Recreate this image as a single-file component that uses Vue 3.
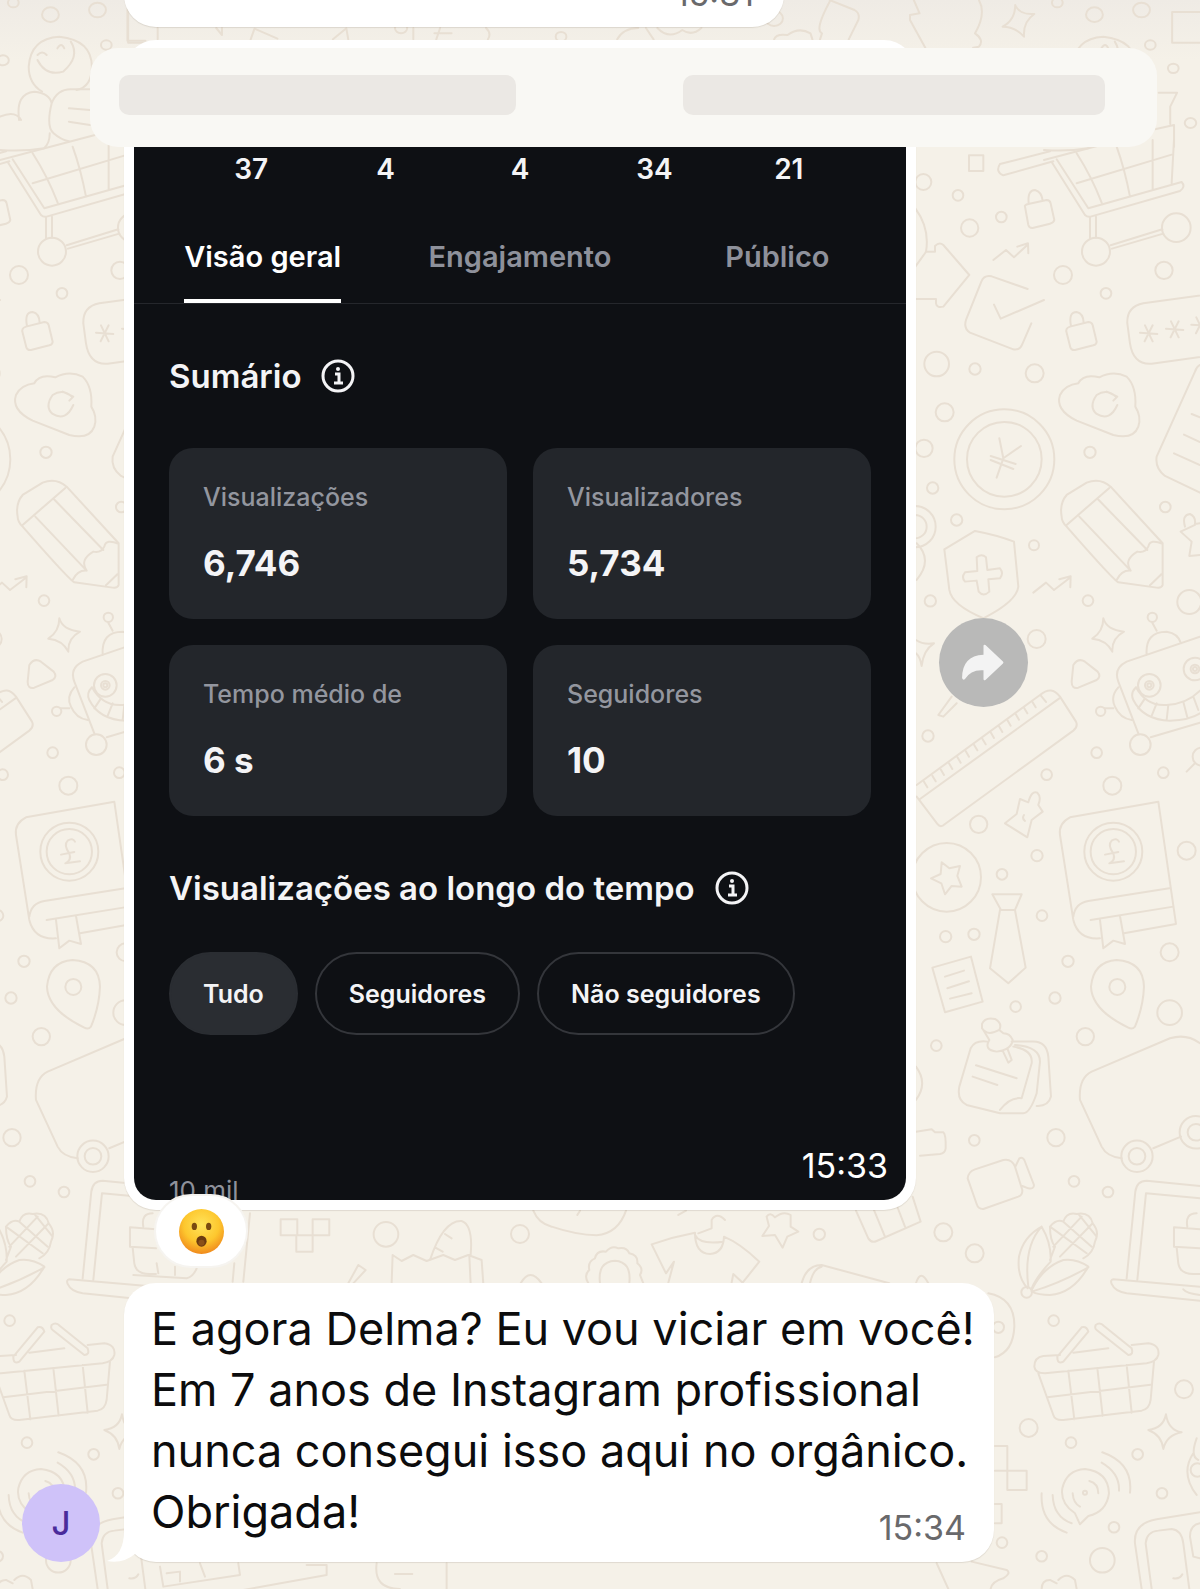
<script setup>
import { ref } from 'vue'

const stats = [37, 4, 4, 34, 21]
const tabs = ['Visão geral', 'Engajamento', 'Público']
const cards = [
   { label: 'Visualizações', value: '6,746' },
   { label: 'Visualizadores', value: '5,734' },
   { label: 'Tempo médio de', value: '6 s' },
   { label: 'Seguidores', value: '10' },
]
const filters = ['Tudo', 'Seguidores', 'Não seguidores']
const lines = [
   'E agora Delma? Eu vou viciar em você!',
   'Em 7 anos de Instagram profissional',
   'nunca consegui isso aqui no orgânico.',
]

const tab = ref(tabs[0])
const filter = ref(filters[0])

// wallpaper repeats horizontally at this distance
const tileWidth = 1044

// each band of the wallpaper is drawn on its own enlarged grid
const bands = [
   {
      at: 'translate(900 140) scale(.3333)',
      dots: [[70,126,24],[174,166,16],[304,231,16],[209,264,26],[489,405,27],[792,391,26],[618,460,16],[110,672,37],[225,687,17],[404,700,27],[134,817,27],[72,925,26],[570,937,17],[98,1044,17],[170,1140,17],[402,1216,15],[796,1101,16],[91,1383,17],[564,1382,16],[868,1386,36],[588,335,42],[829,263,43],[313,958,150],[313,958,112],[45,1160,62],[45,1160,35]],
      paths: [
         // small box, shopping cart
         'M207 46 H250 V93 H207 Z',
         'M310 106 L460 64 M300 72 Q285 95 310 106 M300 72 L450 34 M455 66 L555 225 Q562 232 572 230 L840 153 Q858 140 845 126 L565 205 L470 58 M432 60 L717 -15 M530 40 Q575 110 605 188 M650 20 Q675 90 690 170 M758 0 V148 M822 0 L815 130 M530 130 L815 44 M570 230 V296 M588 230 V293 M632 316 L787 268 M636 326 L790 281',
         // padlocks
         'M375 200 Q372 195 385 192 L440 180 Q450 180 452 190 L463 240 Q462 248 450 251 L398 264 Q388 265 385 255 Z M386 190 Q382 150 405 150 Q425 155 428 182',
         'M500 578 Q495 565 510 560 L565 546 Q575 546 578 555 L590 605 Q590 613 580 616 L525 630 Q515 632 511 622 Z M513 558 Q505 516 530 516 Q550 520 551 548',
         // trend arrows
         'M280 360 L318 330 L342 352 L382 315 M352 320 L384 310 L385 340 M400 1358 L438 1328 L462 1350 L508 1315 M478 1318 L512 1309 L511 1342',
         'M46 380 Q75 340 78 335 H105 V318 Q118 305 130 315 L208 405 L130 500 Q110 505 108 490 V477 H46 M46 205 Q90 265 78 335',
         // check mark
         'M383 447 L275 409 Q252 404 244 425 L198 540 Q190 565 210 578 L340 628 Q360 632 368 610 L394 550 M282 494 L302 536 L432 480',
         // password field
         'M980 456 L730 490 Q680 500 682 550 L690 610 Q700 675 755 671 L980 640 M720 578 L772 582 M735 556 L758 604 M758 556 L734 604 M798 566 L850 570 M813 544 L836 592 M836 544 L812 592 M874 554 L926 558 M889 532 L912 580 M912 532 L888 580',
         // cloud
         'M535 730 Q550 700 598 712 Q640 690 680 710 Q710 740 706 800 Q725 830 715 860 Q700 900 640 885 L530 842 Q465 810 480 765 Q495 735 535 730 Z M648 770 Q620 745 590 765 Q565 800 590 822 Q630 845 652 795 M620 755 L652 770 L640 782',
         'M298 895 L310 955 L363 918 M310 955 L290 1013 M272 948 L347 972 M272 960 L340 987',
         'M900 675 Q890 680 885 695 L770 950 Q765 985 795 1008 L900 1058 M875 822 L900 832 M852 884 L900 906 M822 940 L900 975',
         // pencil
         'M485 1130 Q478 1090 500 1065 L560 1028 Q600 1012 632 1040 L788 1210 V1335 Q785 1345 770 1343 L655 1327 Q640 1320 500 1160 Q485 1145 485 1130 Z M500 1155 L628 1044 M538 1130 L692 1292 M594 1078 L742 1230 M650 1320 Q665 1290 692 1292 Q670 1260 712 1235 Q735 1240 745 1220 Q750 1195 788 1212 M750 1336 L785 1302',
         // shield
         'M133 1228 L225 1173 Q290 1185 342 1205 L355 1340 Q350 1385 250 1435 Q155 1395 148 1350 Z M230 1252 Q245 1240 258 1252 L262 1290 L300 1285 Q312 1300 300 1315 L265 1318 L268 1355 Q250 1372 236 1355 L230 1322 L195 1325 Q183 1312 195 1297 L232 1293 Z',
         'M50 1210 Q100 1260 50 1320 M855 1160 Q845 1125 870 1122 Q888 1130 885 1152 L900 1150 M842 1175 L885 1155 M842 1175 L875 1205 L868 1248 L900 1245',
      ],
   },
   {
      at: 'translate(900 600) scale(.3333)',
      dots: [[410,117,27],[84,408,17],[440,524,16],[590,458,16],[637,557,27],[790,518,16],[236,673,26],[411,767,17],[306,823,16],[860,752,27],[426,947,16],[137,1010,17],[222,1003,17],[504,1084,17],[809,1057,27],[465,1194,17],[347,1220,16],[809,1238,37],[556,1310,26],[109,1337,16],[721,434,31],[748,256,34],[748,256,13],[748,256,6],[885,207,34],[885,207,13],[885,207,6],[602,334,14],[757,52,14],[140,832,103],[640,755,87],[640,755,68],[652,1161,24],[711,1669,47],[711,1669,25],[888,1597,49],[888,1597,25],[905,470,27]],
      paths: [
         'M610 55 Q620 90 672 95 Q635 115 637 155 Q620 120 577 116 Q610 95 610 55 Z M48 120 Q70 135 102 130 Q70 150 65 198 Q60 170 48 160',
         'M520 195 Q535 172 555 185 L593 215 Q605 230 590 240 L535 263 Q515 268 515 245 Z',
         // robot
         'M900 110 L680 185 Q640 205 655 245 L715 400 M752 412 L900 368 M708 262 Q690 280 700 300 Q730 360 810 362 Q870 360 900 340 M708 262 Q740 320 800 315 Q860 312 900 272 M735 295 L715 325 M770 310 L755 348 M805 315 L800 360 M850 305 L862 352 M880 290 L895 330 M655 262 Q630 290 645 320 Q660 355 695 360 M640 325 H615 M740 165 Q735 95 800 95 Q835 100 843 130 M770 92 L757 68',
         // ruler
         'M50 555 Q250 410 420 285 Q455 255 480 290 L528 365 Q535 380 520 392 L135 672 Q122 685 112 672 L50 590 M60 597 L478 295 M155 290 L115 345 L130 350 L170 310 M860 515 L885 490',
         'M72 545 L82 562 M97 527 L107 544 M122 508 L132 525 M147 490 L157 507 M172 471 L182 488 M197 453 L207 470 M222 434 L232 451 M247 416 L257 433 M272 397 L282 414 M297 379 L307 396 M322 360 L332 377 M347 342 L357 359 M372 323 L382 340 M397 305 L407 322 M422 286 L438 306',
         // thumbtack, star badge
         'M360 597 L385 607 Q395 570 412 578 Q425 590 415 615 L428 635 L395 660 L382 712 L315 670 L350 642 Z M372 645 Q365 655 375 663',
         'M125 787 L148 805 L180 798 L172 828 L185 860 L155 858 L135 883 L124 850 L93 835 L122 822 Z',
         // tie, receipt
         'M277 883 H365 L345 930 H303 Z M300 930 L270 1105 L325 1150 L377 1103 L345 930',
         'M97 1103 L213 1070 L248 1205 L135 1237 Z M135 1130 L192 1112 M142 1165 L207 1144 M150 1196 L215 1180',
         // book
         'M510 652 L775 605 L828 972 L672 1000 M600 1015 Q535 1020 520 960 L480 705 Q475 670 510 652 M520 950 Q525 910 565 903 L808 865 M572 960 L820 920 M600 960 L610 1045 L640 1022 L675 1032 L660 948',
         'M657 725 Q650 712 635 722 Q622 735 640 760 Q648 780 628 790 L672 784 M615 764 L655 756',
         // map pin, pinned note
         'M650 1080 Q730 1085 732 1160 Q730 1220 705 1280 Q697 1290 685 1283 Q575 1230 573 1160 Q580 1085 650 1080',
         'M262 1325 Q225 1320 212 1345 L178 1460 Q170 1500 200 1515 L300 1540 H370 M335 1325 H400 Q440 1325 445 1370 L453 1490 Q445 1520 410 1518 M340 1340 Q400 1350 395 1390 L365 1495 Q330 1490 300 1530 M345 1335 Q420 1340 420 1385 L410 1480 Q390 1540 370 1540 M228 1396 L350 1435 M218 1430 L292 1455 M246 1272 Q255 1250 285 1257 Q308 1270 298 1290 Q262 1310 246 1285 Z M250 1290 L268 1320 Q250 1350 290 1355 Q335 1350 338 1320 Q330 1300 310 1300 L298 1290 M308 1352 L325 1388 L335 1380 L322 1345',
         'M900 1330 Q860 1300 810 1315 L575 1415 Q535 1435 540 1500 L605 1640 Q620 1670 665 1675 M760 1645 L843 1610 M48 1400 Q85 1450 48 1500',
      ],
   },
   {
      at: 'translate(900 1080) scale(.3333)',
      dots: [[223,181,16],[468,173,26],[522,304,16],[624,336,16],[130,457,27],[224,520,27],[461,722,16],[852,928,27],[386,1044,27],[513,1088,16],[713,1123,16],[786,1240,16],[642,1342,16],[306,1388,16],[425,1429,16],[607,1441,37],[380,637,16],[295,742,17],[555,1238,6],[892,1170,20]],
      paths: [
         'M48 155 L95 148 L105 157 H130 Q138 162 137 205 Q135 220 120 222 L60 227',
         'M203 295 Q205 275 225 268 L310 240 Q335 235 345 260 L367 330 Q368 345 355 350 L250 387 Q235 388 230 372 Z M347 258 L358 235 Q368 230 373 240 L402 315 Q402 328 385 325 L367 318',
         // corn
         'M383 625 Q350 590 357 530 Q370 470 425 440 Q455 490 452 545 Q410 590 395 625 M425 440 Q370 500 385 620 M395 630 Q430 560 490 540 Q530 535 565 560 Q520 640 450 645 Q415 645 395 635 Q480 610 565 562 M450 440 Q470 415 490 425 Q500 395 530 402 Q570 395 578 430 Q600 455 585 485 Q580 520 550 535 M450 440 Q450 480 465 500 L450 540 M450 440 L560 520 M490 425 L575 500 M535 402 L590 470 M578 430 L480 530 M545 410 L460 500',
         // laptop
         'M900 318 L740 302 Q710 302 706 335 L680 595 M712 600 L738 340 L900 355 M900 620 L640 598 Q630 600 635 612 Q645 635 680 640 L900 662 M850 628 Q860 640 900 645 M900 448 L822 442 V500 L900 505 M830 502 L835 550 Q840 582 880 582 H900 M862 440 Q855 400 890 400',
         // basket
         'M480 825 L430 828 Q403 832 403 860 Q405 880 435 880 L740 850 Q770 845 775 825 Q780 795 745 790 L695 795 M520 818 L625 805 M415 880 L460 1005 Q465 1022 490 1020 L725 992 Q748 988 752 960 L762 845 M442 952 L752 914 M505 872 L523 1018 M592 864 L608 1008 M680 855 L695 998 M472 830 L545 742 Q560 738 565 755 L490 845 Q472 855 472 830 M587 735 Q600 725 612 738 L695 805 Q702 825 685 825 L590 750 Q583 745 587 735',
         'M265 640 Q345 655 343 740 Q340 815 285 832 M798 1003 Q805 1050 845 1057 Q800 1065 790 1107 Q785 1065 745 1050 Q790 1045 798 1003 Z',
         // broadcast
         'M525 1300 Q480 1270 487 1225 Q500 1170 555 1167 Q625 1175 627 1240 Q620 1295 565 1308 L540 1333 Z M607 1117 Q700 1150 690 1238 M605 1148 Q660 1180 657 1232 M425 1240 Q420 1330 500 1358 M458 1245 Q460 1310 515 1330 M518 1240 Q520 1270 540 1280 M568 1203 Q595 1210 595 1240',
         'M285 1098 H322 V1172 M285 1172 H380 V1230 H322 V1172 M285 1272 H305 V1330 H285',
         'M900 1297 L770 1318 Q700 1330 705 1390 L725 1527 M755 1527 L737 1390 Q740 1355 775 1352 L815 1347 Q845 1350 850 1390 L868 1527 M820 1495 Q840 1498 847 1483 M900 1330 Q870 1335 870 1370 L880 1430 L900 1435',
         'M890 1075 Q870 1130 895 1140 M880 1120 Q840 1180 890 1245 M110 1450 L145 1527 M215 1445 L320 1470 Q335 1480 310 1495 Q275 1505 272 1527 M425 1527 Q425 1500 450 1500 L470 1510 M475 1500 Q500 1475 525 1500 L530 1527',
      ],
   },
   {
      at: 'translate(0 1160) scale(.3333)',
      dots: [[1158,223,37]],
      paths: [
         'M842 178 H892 V226 H842 Z M938 178 H988 V226 H938 Z M889 226 H938 V275 H889 Z',
         // bread bag
         'M1175 370 L1178 285 L1205 303 L1240 285 L1280 303 L1330 285 L1365 300 L1405 285 L1445 300 L1450 370 M1408 285 L1412 370 M1290 300 Q1330 180 1385 183 Q1420 195 1412 285 M1335 222 L1355 235 M1305 262 L1328 275',
         'M1045 370 L1075 315 L1097 330 L1060 370 M480 1220 L490 1280 L720 1245 L715 1210 M500 1240 L540 1235 V1265 M600 1210 L615 1250 M920 1215 H980 V1245 L730 1290 M1130 1210 Q1120 1287 1200 1287 M1340 1210 V1287 M1185 1242 H1237 M750 160 L730 365 M703 310 L698 365 M400 345 L560 355 Q580 350 590 325 M475 340 L470 310 M525 345 V320',
      ],
   },
   {
      at: 'translate(500 1120) scale(.3333)',
      dots: [[60,342,27],[958,343,17]],
      paths: [
         'M100 272 Q115 310 155 320 Q230 345 290 346 Q355 340 378 272 M62 490 Q90 440 125 490 M232 285 L240 272 M535 285 L558 272',
         'M265 490 Q250 465 268 450 Q262 425 285 415 Q290 390 318 395 Q335 375 355 385 Q380 380 388 400 Q415 405 412 430 Q432 445 420 465 L430 490 M300 490 Q292 425 345 422 Q395 425 388 490',
         // shirt on a hanger
         'M505 488 L522 425 L498 460 L455 373 Q520 350 585 338 Q585 400 630 402 Q670 400 672 350 Q720 370 778 425 L728 488 L700 462 L695 488 M585 345 Q600 375 670 365 M595 340 L635 325 V300 Q650 275 675 300',
         'M800 290 Q810 275 825 292 Q850 272 872 285 L872 320 L895 335 L862 350 L848 383 L825 345 L787 348 L807 318 Z',
         'M1068 272 L1105 355 Q1115 370 1130 363 L1262 305 L1238 230 M1120 265 L1155 350 M1190 255 L1215 320 M905 490 Q920 435 965 435 L1168 490 M930 490 Q940 445 965 440 M1248 490 Q1262 445 1285 490',
      ],
   },
   {
      at: 'translate(600 0) scale(.3827 .3333)',
      dots: [[1195,8,14],[1292,44,22],[1415,30,22],[1438,135,14],[1498,205,14],[1543,369,15],[455,55,23]],
      paths: [
         'M600 0 L665 30 Q680 40 675 60 L650 118 M600 5 Q560 90 580 100 L575 118 M820 0 L835 40 L810 45 V60 L850 143 M990 0 Q1010 40 980 100 Q1005 120 990 140 L975 143',
         'M1085 15 Q1095 45 1135 42 Q1105 65 1108 110 Q1085 80 1052 80 Q1085 60 1085 15 Z M1568 36 H1495 V128 H1568 M1460 278 H1508 L1490 320 V372 M1450 388 L1500 375 V440',
         'M45 118 Q60 85 100 84 M120 84 L140 118 M150 84 Q180 120 215 90 Q240 110 265 84 M455 118 Q460 100 490 105 Q520 80 550 100 L555 118',
      ],
   },
   {
      // top left corner, seen once per tile
      at: 'translate(1044 0) scale(.3827 .3333)',
      dots: [[8,181,15]],
      paths: [
         'M110 275 Q75 250 75 200 Q80 115 155 110 Q240 120 240 200 Q240 260 200 270 M185 125 Q210 170 165 215 Q120 230 98 180 M98 165 Q110 150 122 165 M150 145 Q160 125 168 145',
         'M50 360 Q40 280 90 275 Q130 280 135 310 Q150 265 190 268 H235 M135 310 Q120 380 140 400 Q160 420 180 424 M0 350 Q40 330 55 360 M130 400 Q130 430 115 445 Q60 455 0 450 M180 325 L235 330 M180 365 L235 375',
      ],
   },
   {
      at: 'scale(.3827 .3333)',
      dots: [[1048,84,16],[1466,110,14]],
      paths: ['M333 30 V122 H380 M412 84 V118 M565 84 L580 105 V84 M655 118 L665 86 L725 116 M870 118 L905 85 L910 118 M1080 84 V118 M1135 100 H1180 M1150 84 L1140 118 M1270 84 Q1285 100 1275 118'],
   },
]
</script>

<template>
   <main class="chat">
      <svg class="wallpaper" aria-hidden="true">
         <g id="doodles">
            <g v-for="(band, i) in bands" :key="i" :transform="band.at">
               <circle v-for="(d, j) in band.dots" :key="'c' + j" :cx="d[0]" :cy="d[1]" :r="d[2]" />
               <path v-for="(p, j) in band.paths" :key="'p' + j" :d="p" />
            </g>
         </g>
         <use href="#doodles" :x="-tileWidth" />
      </svg>

      <article class="bubble earlier"><time>15:31</time></article>

      <div class="row">
         <article class="bubble picture">
            <section class="insights">
               <ul class="stats">
                  <li v-for="(s, i) in stats" :key="i">{{ s }}</li>
               </ul>
               <nav class="tabs">
                  <button v-for="t in tabs" :key="t" :class="{ active: tab == t }" @click="tab = t"><span>{{ t }}</span></button>
               </nav>
               <div class="title">
                  <h2>Sumário</h2>
                  <button class="info" aria-label="Sobre o sumário">
                     <svg viewBox="0 0 34 34"><circle cx="17" cy="17" r="15" /><path d="M14 15 H18 V24 M13 24 H22" /><circle class="dot" cx="17" cy="10" r="2" /></svg>
                  </button>
               </div>
               <dl class="cards">
                  <div v-for="c in cards" :key="c.label" class="card">
                     <dt>{{ c.label }}</dt>
                     <dd>{{ c.value }}</dd>
                  </div>
               </dl>
               <div class="title">
                  <h2>Visualizações ao longo do tempo</h2>
                  <button class="info" aria-label="Sobre as visualizações">
                     <svg viewBox="0 0 34 34"><circle cx="17" cy="17" r="15" /><path d="M14 15 H18 V24 M13 24 H22" /><circle class="dot" cx="17" cy="10" r="2" /></svg>
                  </button>
               </div>
               <div class="filters">
                  <button v-for="f in filters" :key="f" :class="{ active: filter == f }" @click="filter = f">{{ f }}</button>
               </div>
               <div class="axis">10 mil</div>
               <time class="stamp">15:33</time>
            </section>
            <button class="reaction" aria-label="Reação">
               <svg viewBox="0 0 44 44">
                  <defs>
                     <radialGradient id="face" cx=".5" cy=".35" r=".65">
                        <stop offset="0" stop-color="#ffe35a" />
                        <stop offset=".6" stop-color="#fdc72e" />
                        <stop offset="1" stop-color="#f08a1c" />
                     </radialGradient>
                  </defs>
                  <circle cx="22" cy="22" r="22" fill="url(#face)" />
                  <ellipse cx="15" cy="17" rx="2.6" ry="3.6" fill="#7a4a10" />
                  <ellipse cx="29" cy="17" rx="2.6" ry="3.6" fill="#7a4a10" />
                  <ellipse cx="22" cy="31.5" rx="5" ry="5.4" fill="#6b3a10" />
                  <ellipse cx="22" cy="33" rx="3" ry="3" fill="#8a5018" />
               </svg>
            </button>
         </article>
         <button class="forward" aria-label="Encaminhar">
            <svg viewBox="0 0 44 38"><path d="M22 2 Q22 0 24 1 L42 18 Q43 19 42 20 L24 37 Q22 38 22 36 V27 Q9 26 3 36 Q1 38 0 35 Q0 12 22 11 Z" /></svg>
         </button>
      </div>

      <div class="row message">
         <div class="avatar">J</div>
         <article class="bubble text">
            <svg class="tail" viewBox="0 0 34 34"><path d="M17 0 Q18 27 0 33 Q16 36 28 26 L34 0 Z" /></svg>
            <p v-for="l in lines" :key="l">{{ l }}</p>
            <div class="last">
               <p>Obrigada!</p>
               <time>15:34</time>
            </div>
         </article>
      </div>

      <header class="banner">
         <span></span>
         <span></span>
      </header>
   </main>
</template>

<style>
body { margin: 0; background: #f5f1e8; }
</style>

<style scoped>
* { box-sizing: border-box; }
.chat {
   position: relative;
   min-height: 100vh;
   overflow: hidden;
   font-family: Inter, "Liberation Sans", sans-serif;
   background: linear-gradient(#efebe5, #f5f1e8 60px);
}
button { font: inherit; color: inherit; border: none; background: none; padding: 0; cursor: pointer; }
p, h2, ul, dl, dd { margin: 0; padding: 0; }

.wallpaper {
   position: absolute; inset: 0; width: 100%; height: 100%;
   fill: none; stroke: #e8dfd3; stroke-width: 2px;
   stroke-linecap: round; stroke-linejoin: round;
}
.wallpaper path, .wallpaper circle { vector-effect: non-scaling-stroke; }

.bubble {
   position: relative;
   background: #fff;
   border-radius: 32px;
   box-shadow: 0 1px 1px rgba(90, 80, 60, .14);
}
.bubble time { font-size: 34px; line-height: 40px; color: #69696b; }
.earlier {
   width: 55vw;
   margin: -60px 0 13px 124px;
   padding: 34px 30px 13px;
   height: 87px;
   text-align: right;
}

.row { position: relative; display: flex; padding-left: 124px; }
.picture { width: 66vw; padding: 10px; }
.insights {
   position: relative;
   display: flex; flex-direction: column;
   height: 1150px;
   padding-top: 97px;
   border-radius: 22px;
   overflow: hidden;
   color: #f4f4f6;
   background: #0e1014;
}
.stats {
   display: grid; grid-template-columns: repeat(5, 1fr);
   padding: 2px 50px 0;
   list-style: none;
   text-align: center;
   font-size: 28px; line-height: 40px; font-weight: 600;
}
.tabs {
   display: grid; grid-template-columns: repeat(3, 1fr);
   margin-top: 32px;
   border-bottom: 1px solid #25272c;
   font-size: 29px; line-height: 72px; font-weight: 600;
   color: #8e919b;
}
.tabs .active { color: #fff; }
.tabs span { display: inline-block; padding-bottom: 6px; border-bottom: 4px solid transparent; }
.tabs .active span { border-color: #fff; }

.title {
   display: flex; align-items: center; gap: 20px;
   margin: 51px 35px 0;
}
.title h2 { font-size: 33px; line-height: 42px; font-weight: 600; }
.info { width: 34px; height: 34px; }
.info svg { display: block; fill: none; stroke: #f4f4f6; stroke-width: 3; }
.info .dot { fill: #f4f4f6; stroke: none; }
.cards {
   display: grid; grid-template-columns: 1fr 1fr; gap: 26px;
   margin: 51px 35px 0;
}
.card {
   height: 171px;
   padding: 32px 34px;
   border-radius: 24px;
   background: #23262b;
}
.card dt { font-size: 25px; line-height: 34px; font-weight: 500; color: #93969f; }
.card dd { margin-top: 25px; font-size: 35px; line-height: 48px; font-weight: 700; }
.filters { display: flex; gap: 17px; margin: 43px 35px 0; }
.filters button {
   height: 83px;
   padding: 0 32px;
   border: 2px solid #34363b;
   border-radius: 42px;
   font-size: 25px; font-weight: 600;
}
.filters .active { background: #2a2d32; border-color: #2a2d32; }
.axis {
   margin: auto 35px -8px;
   font-size: 26px; line-height: 34px;
   color: #8e919b;
}
.bubble .stamp { position: absolute; right: 18px; bottom: 14px; color: #fff; }
.reaction {
   position: absolute; left: 30px; bottom: -58px;
   display: flex; align-items: center; justify-content: center;
   width: 94px; height: 74px;
   border: 2px solid #f6f4f0;
   border-radius: 37px;
   background: #fff;
}
.reaction svg { width: 45px; height: 45px; }
.forward {
   display: flex; align-items: center; justify-content: center;
   flex: none;
   align-self: center;
   width: 89px; height: 89px;
   margin: 74px 0 0 23px;
   border-radius: 50%;
   background: #b9b9b8;
}
.forward svg { width: 43px; height: 37px; fill: #f3f3f3; }

.message { align-items: flex-end; padding-left: 22px; margin-top: 73px; }
.avatar {
   width: 78px; height: 78px;
   margin-right: 24px;
   border-radius: 50%;
   background: #cfc2f9;
   color: #4a2b9b;
   text-align: center;
   font-size: 33px; line-height: 78px; font-weight: 500;
}
.text {
   width: 870px;
   max-width: calc(100vw - 144px);
   min-height: 279px;
   padding: 15px 20px 19px 27px;
   font-size: 45px; line-height: 61px;
   color: #0c0c0d;
}
.text p { white-space: nowrap; }
.last { display: flex; justify-content: space-between; align-items: flex-end; }
.last time { margin: 0 8px -6px 0; }
.tail { position: absolute; left: -17px; bottom: 0; width: 34px; height: 34px; fill: #fff; }

.banner {
   position: absolute; top: 48px; left: 90px; right: 43px;
   display: grid; grid-template-columns: 397fr 422fr; gap: 167px;
   padding: 27px 52px 32px 29px;
   border-radius: 28px;
   background: #f9f8f4;
}
.banner span { height: 40px; border-radius: 10px; background: #ebe8e4; }
</style>
